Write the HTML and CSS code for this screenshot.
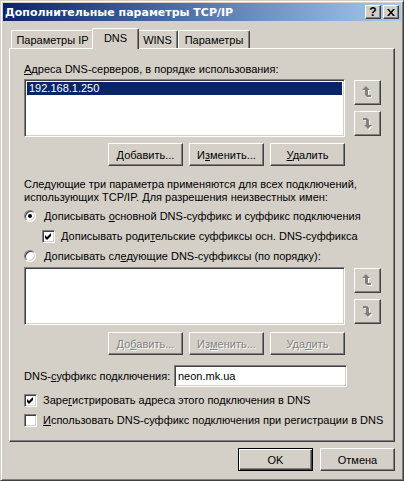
FILE: index.html
```html
<!DOCTYPE html>
<html lang="ru">
<head>
<meta charset="utf-8">
<title>Дополнительные параметры TCP/IP</title>
<link rel="stylesheet" href="styles.css">
</head>
<body>
<div class="window">
  <div class="titlebar">
    <span class="title">Дополнительные параметры TCP/IP</span>
    <div class="tb-btns">
      <div class="tb-btn"><span class="q">?</span></div>
      <div class="tb-btn"><svg width="8" height="7" viewBox="0 0 8 7"><path d="M0 0H2L4 2.5L6 0H8L5 3.5L8 7H6L4 4.5L2 7H0L3 3.5Z" fill="#000"/></svg></div>
    </div>
  </div>
  <div class="content">
    <div class="tabs">
      <div class="tab tab-ip">Параметры IP</div>
      <div class="tab tab-dns active">DNS</div>
      <div class="tab tab-wins">WINS</div>
      <div class="tab tab-opt">Параметры</div>
    </div>
    <div class="panel">
      <div class="label"><u>А</u>дреса DNS-серверов, в порядке использования:</div>
      <div class="listrow">
        <div class="list"><div class="item">192.168.1.250</div></div>
        <div class="arrows">
          <div class="btn arrowbtn"><svg width="11" height="13" viewBox="0 0 11 13"><path transform="translate(1 1)" d="M4 0L8 4H6V9H9V11H5L3 9V4H0Z" fill="#fff"/><path d="M4 0L8 4H6V9H9V11H5L3 9V4H0Z" fill="#808080"/></svg></div>
          <div class="btn arrowbtn"><svg width="11" height="13" viewBox="0 0 11 13"><g transform="rotate(180 5 6)"><path transform="translate(-1 -1)" d="M4 0L8 4H6V9H9V11H5L3 9V4H0Z" fill="#fff"/></g><g transform="rotate(180 5 6)"><path d="M4 0L8 4H6V9H9V11H5L3 9V4H0Z" fill="#808080"/></g></svg></div>
        </div>
      </div>
      <div class="btnrow">
        <div class="btn"><span><u>Д</u>обавить...</span></div>
        <div class="btn"><span>И<u>з</u>менить...</span></div>
        <div class="btn"><span><u>У</u>далить</span></div>
      </div>
      <p class="para">Следующие три параметра применяются для всех подключений,<br>использующих TCP/IP. Для разрешения неизвестных имен:</p>
      <div class="opt first">
        <span class="radio"><span class="dot"></span></span>
        <span>Дописывать <u>о</u>сновной DNS-суффикс и суффикс подключения</span>
      </div>
      <div class="opt indent">
        <span class="check"><svg width="7" height="7" viewBox="0 0 7 7"><path d="M0 2L2 4L6 0V3L2 7L0 5Z" fill="#000"/></svg></span>
        <span>Дописывать роди<u>т</u>ельские суффиксы осн. DNS-суффикса</span>
      </div>
      <div class="opt">
        <span class="radio"></span>
        <span>Дописывать сл<u>е</u>дующие DNS-суффиксы (по порядку):</span>
      </div>
      <div class="listrow list2">
        <div class="list"></div>
        <div class="arrows">
          <div class="btn arrowbtn"><svg width="11" height="13" viewBox="0 0 11 13"><path transform="translate(1 1)" d="M4 0L8 4H6V9H9V11H5L3 9V4H0Z" fill="#fff"/><path d="M4 0L8 4H6V9H9V11H5L3 9V4H0Z" fill="#808080"/></svg></div>
          <div class="btn arrowbtn"><svg width="11" height="13" viewBox="0 0 11 13"><g transform="rotate(180 5 6)"><path transform="translate(-1 -1)" d="M4 0L8 4H6V9H9V11H5L3 9V4H0Z" fill="#fff"/></g><g transform="rotate(180 5 6)"><path d="M4 0L8 4H6V9H9V11H5L3 9V4H0Z" fill="#808080"/></g></svg></div>
        </div>
      </div>
      <div class="btnrow btnrow2">
        <div class="btn dis"><span>До<u>б</u>авить...</span></div>
        <div class="btn dis"><span>Из<u>м</u>енить...</span></div>
        <div class="btn dis"><span>Уда<u>л</u>ить</span></div>
      </div>
      <div class="suffixrow">
        <span class="suffixlabel">DNS-<u>с</u>уффикс подключения:</span>
        <div class="input">neon.mk.ua</div>
      </div>
      <div class="opt cb3">
        <span class="check"><svg width="7" height="7" viewBox="0 0 7 7"><path d="M0 2L2 4L6 0V3L2 7L0 5Z" fill="#000"/></svg></span>
        <span>Заре<u>г</u>истрировать адреса этого подключения в DNS</span>
      </div>
      <div class="opt">
        <span class="check"></span>
        <span><u>И</u>спользовать DNS-суффикс подключения при регистрации в DNS</span>
      </div>
    </div>
    <div class="footer">
      <div class="btn default"><span>OK</span></div>
      <div class="btn"><span>Отмена</span></div>
    </div>
  </div>
</div>
</body>
</html>
```
FILE: styles.css
```css
html, body {
  margin: 0;
  padding: 0;
}
body {
  width: 404px;
  height: 481px;
  background: #d4d0c8;
  font-family: "Liberation Sans", Arial, sans-serif;
  font-size: 11px;
  color: #000;
  overflow: hidden;
}
u {
  text-decoration: underline;
  text-underline-offset: 1px;
}
.window {
  box-sizing: border-box;
  width: 404px;
  height: 481px;
  border: 1px solid;
  border-color: #d4d0c8 #404040 #404040 #d4d0c8;
  box-shadow: inset 1px 1px #fff, inset -1px -1px #808080;
  padding: 2px;
  background: #d4d0c8;
  display: flex;
  flex-direction: column;
}
.titlebar {
  height: 18px;
  flex: none;
  background: linear-gradient(to right, #0a246a, #a6caf0);
  display: flex;
  align-items: center;
  padding: 0 2px;
}
.title {
  flex: 1;
  color: #fff;
  font-weight: bold;
  font-size: 11px;
  font-family: "DejaVu Sans", "Liberation Sans", sans-serif;
  white-space: nowrap;
}
.tb-btns {
  display: flex;
  gap: 2px;
}
.tb-btn {
  box-sizing: border-box;
  width: 16px;
  height: 14px;
  border: 1px solid;
  border-color: #fff #404040 #404040 #fff;
  box-shadow: inset -1px -1px #808080;
  background: #d4d0c8;
  display: flex;
  align-items: center;
  justify-content: center;
}
.q {
  font-weight: bold;
  font-size: 12px;
  line-height: 12px;
  font-family: "Liberation Sans", Arial, sans-serif;
}
.content {
  flex: 1;
  display: flex;
  flex-direction: column;
  padding: 0 6px;
}
.tabs {
  height: 27px;
  flex: none;
  box-sizing: border-box;
  display: flex;
  align-items: flex-end;
  padding-left: 2px;
}
.tab {
  box-sizing: border-box;
  height: 18px;
  border: 1px solid;
  border-color: #fff #404040 transparent #fff;
  border-bottom: none;
  border-radius: 2px 2px 0 0;
  box-shadow: inset -1px 0 #808080;
  text-align: center;
  padding-top: 3px;
  line-height: 13px;
  white-space: nowrap;
  background: #d4d0c8;
}
.tab-ip { width: 83px; }
.tab-dns { width: 43px; }
.tab-wins { width: 41px; }
.tab-opt { width: 72px; }
.tab.active {
  height: 21px;
  width: 47px;
  margin: 0 -2px -1px;
  padding-top: 3px;
  position: relative;
  z-index: 1;
}
.panel {
  flex: none;
  box-sizing: border-box;
  height: 394px;
  border: 1px solid;
  border-color: #fff #404040 #404040 #fff;
  box-shadow: inset -1px -1px #808080;
  padding: 14px 0 0 14px;
}
.label {
  line-height: 13px;
  height: 13px;
  white-space: nowrap;
}
.listrow {
  display: flex;
  gap: 9px;
  margin-top: 3px;
}
.list {
  box-sizing: border-box;
  width: 321px;
  height: 58px;
  border: 1px solid;
  border-color: #808080 #fff #fff #808080;
  box-shadow: inset 1px 1px #404040, inset -1px -1px #d4d0c8;
  background: #fff;
  padding: 2px;
}
.item {
  height: 13px;
  line-height: 13px;
  background: #0a246a;
  color: #fff;
  padding-left: 2px;
}
.arrows {
  display: flex;
  flex-direction: column;
  gap: 6px;
  padding-top: 1px;
}
.btn {
  box-sizing: border-box;
  width: 75px;
  height: 23px;
  border: 1px solid;
  border-color: #fff #404040 #404040 #fff;
  box-shadow: inset -1px -1px #808080;
  background: #d4d0c8;
  display: flex;
  align-items: center;
  justify-content: center;
  line-height: 13px;
  white-space: nowrap;
  padding-top: 1px;
}
.btn.arrowbtn {
  width: 27px;
  height: 25px;
  padding-top: 0;
}
.btn.default {
  border-color: #000;
  box-shadow: inset 1px 1px #fff, inset -1px -1px #404040, inset -2px -2px #808080;
}
.dis {
  color: #808080;
  text-shadow: 1px 1px #fff;
}
.btnrow {
  display: flex;
  justify-content: flex-end;
  gap: 6px;
  width: 321px;
  margin-top: 6px;
}
.btnrow2 {
  margin-top: 7px;
}
.para {
  margin: 12px 0 0;
  line-height: 13px;
  white-space: nowrap;
}
.opt {
  height: 20px;
  display: flex;
  align-items: center;
  white-space: nowrap;
}
.opt.first {
  margin-top: 2px;
}
.opt.indent {
  padding-left: 18px;
}
.radio {
  box-sizing: border-box;
  width: 12px;
  height: 12px;
  border-radius: 50%;
  border: 1px solid;
  border-color: #808080 #fff #fff #808080;
  box-shadow: inset 1px 1px #404040, inset -1px -1px #d4d0c8;
  background: #fff;
  margin-right: 8px;
  display: flex;
  align-items: center;
  justify-content: center;
  flex: none;
}
.dot {
  width: 4px;
  height: 4px;
  border-radius: 50%;
  background: #000;
}
.check {
  box-sizing: border-box;
  width: 13px;
  height: 13px;
  border: 1px solid;
  border-color: #808080 #fff #fff #808080;
  box-shadow: inset 1px 1px #404040, inset -1px -1px #d4d0c8;
  background: #fff;
  margin-right: 6px;
  display: flex;
  align-items: center;
  justify-content: center;
  flex: none;
}
.list2 {
  margin-top: 1px;
}
.suffixrow {
  display: flex;
  align-items: center;
  height: 22px;
  margin-top: 10px;
}
.suffixlabel {
  width: 150px;
  white-space: nowrap;
}
.input {
  box-sizing: border-box;
  width: 173px;
  height: 22px;
  border: 1px solid;
  border-color: #808080 #fff #fff #808080;
  box-shadow: inset 1px 1px #404040, inset -1px -1px #d4d0c8;
  background: #fff;
  padding: 3px 0 0 3px;
  line-height: 14px;
}
.opt.cb3 {
  margin-top: 3px;
}
.footer {
  display: flex;
  justify-content: flex-end;
  gap: 7px;
  margin-top: 6px;
}
```
